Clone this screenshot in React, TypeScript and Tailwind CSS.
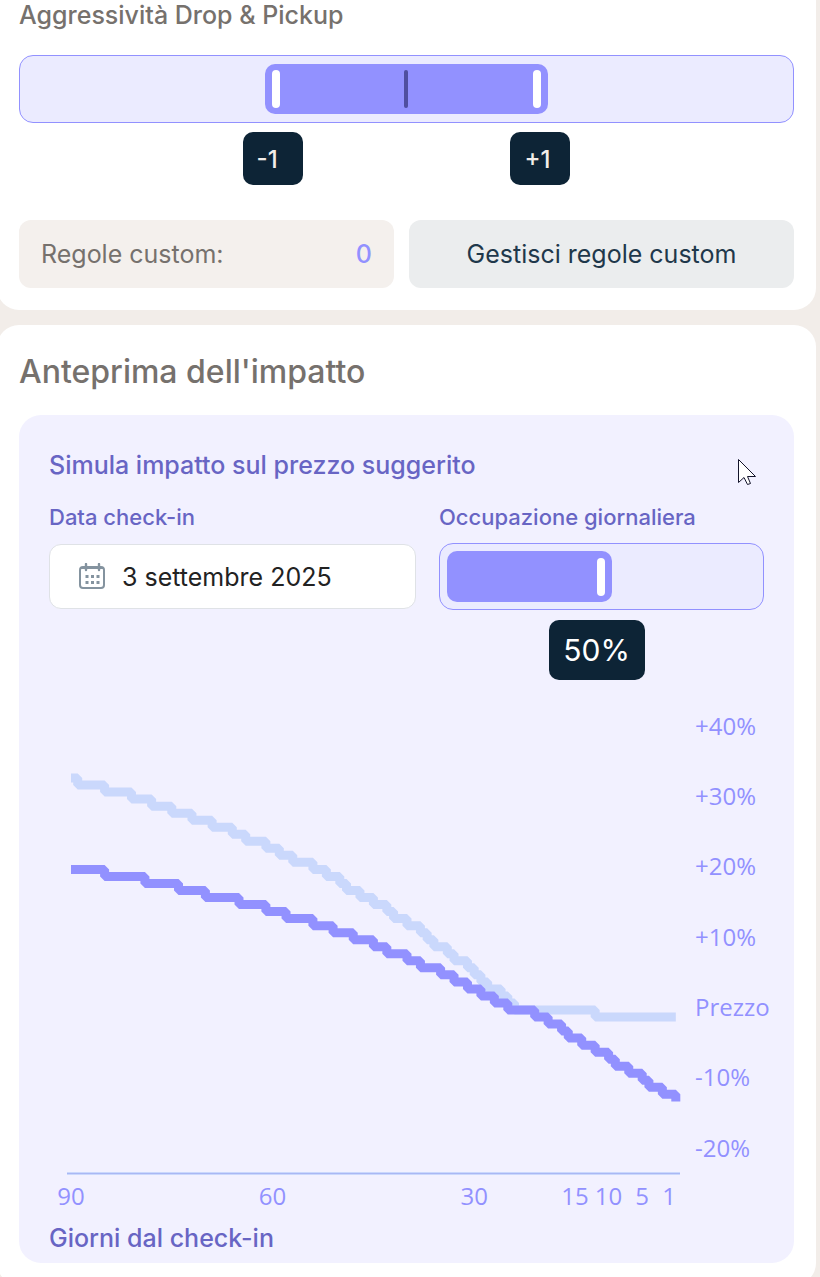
import React, { useState } from 'react';

interface Series {
  start: number;
  drops: number[];
}

const DAY_WIDTH = 6.72;
const PERCENT_HEIGHT = 7.03;
const CHART_LEFT = 22;
const ZERO_Y = 310;
const TOTAL_DAYS = 90;

// Each drop is the day (counted from 90 days before check-in) that loses 1%
const BASE_SERIES: Series = {
  start: 33,
  drops: [
    1, 5, 9, 12, 15, 18, 21, 24, 26, 29, 31, 33, 36, 38, 40, 41, 43, 45, 47,
    48, 50, 52, 53, 54, 56, 57, 59, 60, 61, 62, 64, 65, 66, 78,
  ],
};

const SIMULATED_SERIES: Series = {
  start: 20,
  drops: [
    5, 11, 16, 20, 25, 29, 32, 36, 39, 42, 45, 47, 50, 52, 55, 57, 59, 61, 63,
    65, 69, 71, 73, 74, 76, 78, 80, 81, 83, 85, 86, 88, 90,
  ],
};

const Y_LABELS = [
  { value: 40, label: '+40%' },
  { value: 30, label: '+30%' },
  { value: 20, label: '+20%' },
  { value: 10, label: '+10%' },
  { value: 0, label: 'Prezzo' },
  { value: -10, label: '-10%' },
  { value: -20, label: '-20%' },
];

const X_LABELS = [90, 60, 30, 15, 10, 5, 1];

const toX = (day: number) => CHART_LEFT + day * DAY_WIDTH;
const toY = (percent: number) => ZERO_Y - percent * PERCENT_HEIGHT;

const buildPath = ({ start, drops }: Series) => {
  let level = start;
  let path = `M${toX(0)} ${toY(level)}`;
  drops.forEach((day) => {
    path += `H${toX(day)}`;
    level -= 1;
    path += `V${toY(level)}`;
  });
  return drops[drops.length - 1] === TOTAL_DAYS
    ? path
    : `${path}H${toX(TOTAL_DAYS)}`;
};

const CalendarIcon: React.FC = () => (
  <svg
    className="w-7 h-7 shrink-0"
    viewBox="0 0 28 28"
    fill="none"
    stroke="#84939f"
    strokeWidth="2"
    aria-hidden="true"
  >
    <rect x="2" y="4" width="24" height="21" rx="3" />
    <path d="M2.500 5h23" />
    <path d="M8 1v6M21 1v6" strokeWidth="2.4" strokeLinecap="round" />
    <path
      d="M7.500 13.500h3M13 13.500h3M18.500 13.500h3M7.500 19.500h3M13 19.500h3M18.500 19.500h3"
      strokeWidth="3"
    />
  </svg>
);

const CursorIcon: React.FC = () => (
  <svg
    className="absolute right-[37px] top-[43px] w-5 h-7"
    viewBox="0 0 20 28"
    aria-hidden="true"
  >
    <path
      d="M1.500 1.500V24.500L7 19.500L10.500 26.500L13.500 25.500L10.500 18.500H18.500Z"
      fill="#ffffff"
      stroke="#14142b"
      strokeWidth="1"
    />
  </svg>
);

const ImpactChart: React.FC = () => (
  <svg
    className="block w-full mt-5 overflow-visible"
    viewBox="0 0 715 515"
    role="img"
    aria-label="Impatto sul prezzo per giorni dal check-in"
  >
    <path
      d={buildPath(BASE_SERIES)}
      fill="none"
      stroke="#cad8fc"
      strokeWidth="9"
      strokeLinejoin="bevel"
    />
    <path
      d={buildPath(SIMULATED_SERIES)}
      fill="none"
      stroke="#9291ff"
      strokeWidth="9"
      strokeLinejoin="bevel"
    />
    <path d="M18 473.500H631" stroke="#cad8fc" strokeWidth="3" />
    <path d="M18 473.500H631" stroke="#a9b7f4" strokeWidth="1" />
    <g fill="#9291ff" className="font-['Open_Sans','Noto_Sans',sans-serif] text-2xl">
      {Y_LABELS.map(({ value, label }) => (
        <text key={label} x="646" y={toY(value) + 6}>
          {label}
        </text>
      ))}
      {X_LABELS.map((day) => (
        <text key={day} x={toX(TOTAL_DAYS - day)} y="505" textAnchor="middle">
          {day}
        </text>
      ))}
    </g>
  </svg>
);

const App: React.FC = () => {
  const [aggressiveness, setAggressiveness] = useState(1);
  const [occupancy, setOccupancy] = useState(50);

  return (
    <div className="h-screen overflow-hidden bg-[#f2ede9] font-[Inter,sans-serif]">
      <section className="-ml-[3px] mr-1 rounded-b-[22px] bg-white px-[22px] pb-[22px]">
        <h3 className="text-[25px] leading-[30px] font-medium text-[#76716d]">
          Aggressività Drop &amp; Pickup
        </h3>

        <div className="relative mt-[25px] h-[68px] rounded-[14px] border border-[#9291ff] bg-[#ebebff] py-2">
          <div className="mx-auto flex h-[50px] w-[36.500%] items-center justify-between rounded-[10px] bg-[#9291ff] px-[7px]">
            <span className="h-[38px] w-2 rounded-full bg-white" />
            <span className="h-[38px] w-1 rounded-full bg-[#504fa0]" />
            <span className="h-[38px] w-2 rounded-full bg-white" />
          </div>
          <input
            type="range"
            min="0"
            max="3"
            value={aggressiveness}
            onChange={(e) => setAggressiveness(parseInt(e.target.value))}
            aria-label="Aggressività Drop & Pickup"
            className="absolute inset-0 h-full w-full cursor-pointer opacity-0"
          />
        </div>

        <div className="mx-auto mt-[9px] flex w-[42.300%] justify-between text-2xl font-medium text-[#f2ede9]">
          <output className="h-[53px] w-[60px] rounded-[10px] bg-[#0d2436] pl-[14px] leading-[55px]">
            -{aggressiveness}
          </output>
          <output className="h-[53px] w-[60px] rounded-[10px] bg-[#0d2436] pl-[14px] leading-[55px]">
            +{aggressiveness}
          </output>
        </div>

        <div className="mt-[35px] grid grid-cols-[375fr_385fr] gap-[15px] text-[25px] leading-[30px]">
          <div className="flex h-[68px] items-center justify-between rounded-xl bg-[#f4f0ed] px-[22px] text-[#76716d]">
            <span>Regole custom:</span>
            <span className="font-medium text-[#9291ff]">0</span>
          </div>
          <button
            type="button"
            className="h-[68px] rounded-xl bg-[#ebedee] text-[#1f384b]"
          >
            Gestisci regole custom
          </button>
        </div>
      </section>

      <section className="-ml-[3px] mr-1 mt-[15px] rounded-[22px] bg-white px-[22px] pb-[22px] pt-[27px]">
        <h2 className="text-[32px] leading-10 font-medium text-[#76716d]">
          Anteprima dell'impatto
        </h2>

        <div className="relative mt-[23px] rounded-[22px] bg-[#f2f1ff] px-[30px] pb-[10px] pt-[35px] text-[#6865c4]">
          <h3 className="text-[25px] leading-[30px] font-medium">
            Simula impatto sul prezzo suggerito
          </h3>
          <CursorIcon />

          <div className="mt-[23px] grid grid-cols-[367fr_325fr] gap-[23px]">
            <div>
              <label
                htmlFor="checkin"
                className="block text-[22px] leading-7 font-medium"
              >
                Data check-in
              </label>
              <button
                id="checkin"
                type="button"
                className="mt-[13px] flex h-[65px] w-full items-center gap-4 rounded-xl border border-[#dfe2e6] bg-white px-7 text-[25px] leading-[30px] text-[#222222]"
              >
                <CalendarIcon />
                3 settembre 2025
              </button>
            </div>

            <div>
              <label
                htmlFor="occupancy"
                className="block text-[22px] leading-7 font-medium"
              >
                Occupazione giornaliera
              </label>
              <div className="relative mt-3 h-[67px] rounded-[14px] border border-[#9291ff] bg-[#ebebff] p-[7px]">
                <div
                  className="flex h-[51px] items-center justify-end rounded-[10px] bg-[#9291ff] pr-[7px]"
                  style={{ width: `${6 + occupancy * 0.945}%` }}
                >
                  <span className="h-[38px] w-2 rounded-full bg-white" />
                </div>
                <input
                  id="occupancy"
                  type="range"
                  min="0"
                  max="100"
                  value={occupancy}
                  onChange={(e) => setOccupancy(parseInt(e.target.value))}
                  className="absolute inset-0 h-full w-full cursor-pointer opacity-0"
                />
              </div>
              <div className="relative mt-[10px] h-[60px]">
                <output
                  htmlFor="occupancy"
                  className="absolute top-0 w-24 -translate-x-1/2 rounded-[10px] bg-[#0d2436] text-center text-[30px] leading-[60px] text-white"
                  style={{ left: `${occupancy * 0.97}%` }}
                >
                  {occupancy}%
                </output>
              </div>
            </div>
          </div>

          <ImpactChart />

          <p className="mt-2 text-[25px] leading-[30px] font-medium">
            Giorni dal check-in
          </p>
        </div>
      </section>
    </div>
  );
};

export default App;
